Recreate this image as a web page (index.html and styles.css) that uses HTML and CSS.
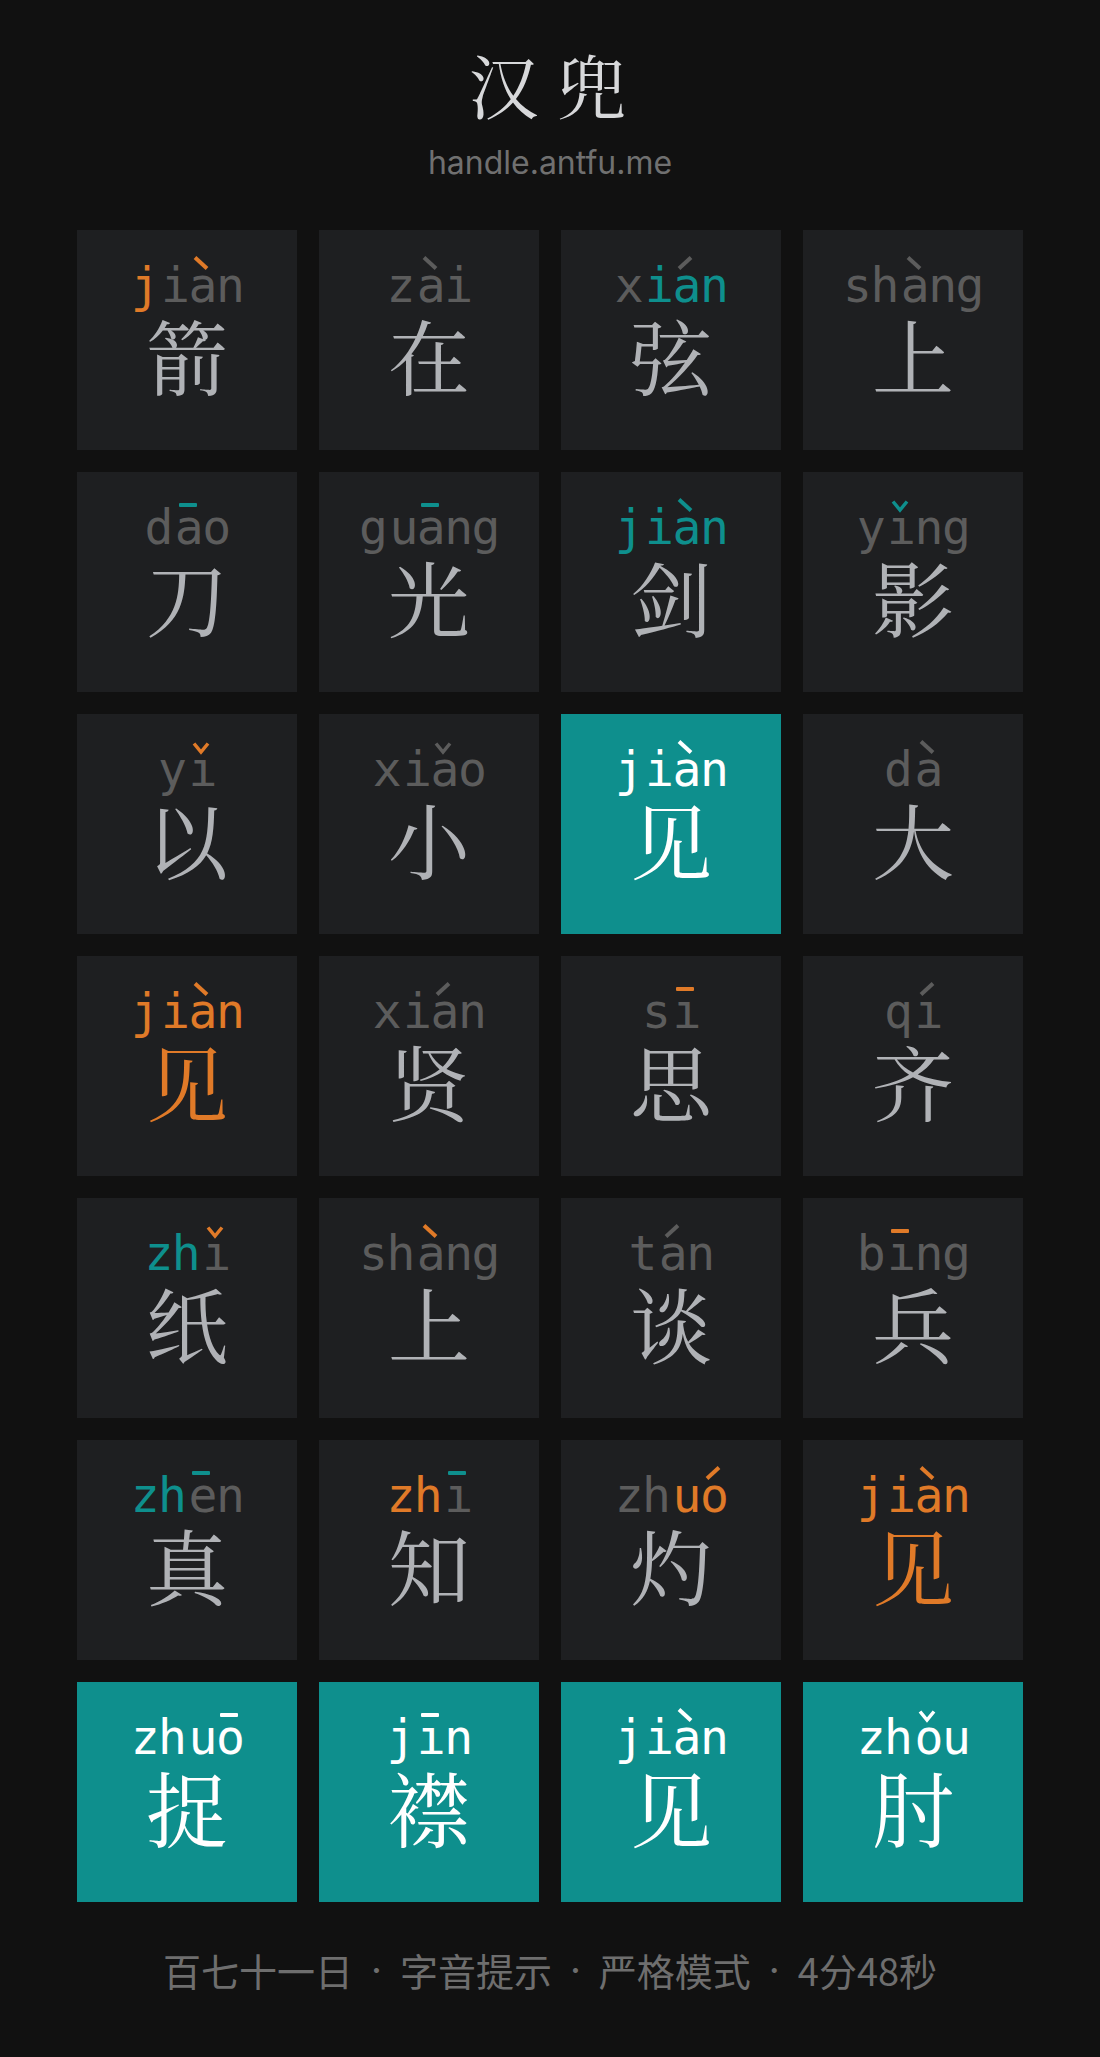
FILE: index.html
```html
<!DOCTYPE html>
<html lang="zh">
<head>
<meta charset="utf-8">
<title>汉兜</title>
<link rel="stylesheet" href="styles.css">
</head>
<body>
<main class="page">
  <header class="header">
    <h1 class="title"><span>汉</span><span>兜</span></h1>
    <div class="subtitle">handle.antfu.me</div>
  </header>

  <section class="board">
    <!-- row 1 -->
    <div class="cell"><div class="py"><span class="ini mid">j</span><span class="fin">i<span class="v">a<span class="tone mid"><svg width="16" height="14" viewBox="0 0 16 14"><path d="M2 1.5 L14 12.5"/></svg></span></span>n</span></div><div class="zi">箭</div></div>
    <div class="cell"><div class="py"><span class="ini">z</span><span class="fin"><span class="v">a<span class="tone"><svg width="16" height="14" viewBox="0 0 16 14"><path d="M2 1.5 L14 12.5"/></svg></span></span>i</span></div><div class="zi">在</div></div>
    <div class="cell"><div class="py"><span class="ini">x</span><span class="fin ok">i<span class="v">a<span class="tone gray"><svg width="16" height="14" viewBox="0 0 16 14"><path d="M2 12.5 L14 1.5"/></svg></span></span>n</span></div><div class="zi">弦</div></div>
    <div class="cell"><div class="py"><span class="ini">sh</span><span class="fin"><span class="v">a<span class="tone"><svg width="16" height="14" viewBox="0 0 16 14"><path d="M2 1.5 L14 12.5"/></svg></span></span>ng</span></div><div class="zi">上</div></div>

    <!-- row 2 -->
    <div class="cell"><div class="py"><span class="ini">d</span><span class="fin"><span class="v">a<span class="tone macron ok"><svg width="18" height="4" viewBox="0 0 18 4"><rect width="18" height="4" rx="1"/></svg></span></span>o</span></div><div class="zi">刀</div></div>
    <div class="cell"><div class="py"><span class="ini">g</span><span class="fin">u<span class="v">a<span class="tone macron ok"><svg width="18" height="4" viewBox="0 0 18 4"><rect width="18" height="4" rx="1"/></svg></span></span>ng</span></div><div class="zi">光</div></div>
    <div class="cell"><div class="py"><span class="ini ok">j</span><span class="fin ok">i<span class="v">a<span class="tone ok"><svg width="16" height="14" viewBox="0 0 16 14"><path d="M2 1.5 L14 12.5"/></svg></span></span>n</span></div><div class="zi">剑</div></div>
    <div class="cell"><div class="py"><span class="ini">y</span><span class="fin"><span class="v">ı<span class="tone caron ok"><svg width="18" height="12" viewBox="0 0 18 12"><path d="M2 1.5 L9 10 L16 1.5"/></svg></span></span>ng</span></div><div class="zi">影</div></div>

    <!-- row 3 -->
    <div class="cell"><div class="py"><span class="ini">y</span><span class="fin"><span class="v">ı<span class="tone caron mid"><svg width="18" height="12" viewBox="0 0 18 12"><path d="M2 1.5 L9 10 L16 1.5"/></svg></span></span></span></div><div class="zi">以</div></div>
    <div class="cell"><div class="py"><span class="ini">x</span><span class="fin">i<span class="v">a<span class="tone caron"><svg width="18" height="12" viewBox="0 0 18 12"><path d="M2 1.5 L9 10 L16 1.5"/></svg></span></span>o</span></div><div class="zi">小</div></div>
    <div class="cell exact"><div class="py"><span class="ini">j</span><span class="fin">i<span class="v">a<span class="tone"><svg width="16" height="14" viewBox="0 0 16 14"><path d="M2 1.5 L14 12.5"/></svg></span></span>n</span></div><div class="zi">见</div></div>
    <div class="cell"><div class="py"><span class="ini">d</span><span class="fin"><span class="v">a<span class="tone"><svg width="16" height="14" viewBox="0 0 16 14"><path d="M2 1.5 L14 12.5"/></svg></span></span></span></div><div class="zi">大</div></div>

    <!-- row 4 -->
    <div class="cell"><div class="py"><span class="ini mid">j</span><span class="fin mid">i<span class="v">a<span class="tone mid"><svg width="16" height="14" viewBox="0 0 16 14"><path d="M2 1.5 L14 12.5"/></svg></span></span>n</span></div><div class="zi mid">见</div></div>
    <div class="cell"><div class="py"><span class="ini">x</span><span class="fin">i<span class="v">a<span class="tone"><svg width="16" height="14" viewBox="0 0 16 14"><path d="M2 12.5 L14 1.5"/></svg></span></span>n</span></div><div class="zi">贤</div></div>
    <div class="cell"><div class="py"><span class="ini">s</span><span class="fin"><span class="v">ı<span class="tone macron mid"><svg width="18" height="4" viewBox="0 0 18 4"><rect width="18" height="4" rx="1"/></svg></span></span></span></div><div class="zi">思</div></div>
    <div class="cell"><div class="py"><span class="ini">q</span><span class="fin"><span class="v">ı<span class="tone"><svg width="16" height="14" viewBox="0 0 16 14"><path d="M2 12.5 L14 1.5"/></svg></span></span></span></div><div class="zi">齐</div></div>

    <!-- row 5 -->
    <div class="cell"><div class="py"><span class="ini ok">zh</span><span class="fin"><span class="v">ı<span class="tone caron mid"><svg width="18" height="12" viewBox="0 0 18 12"><path d="M2 1.5 L9 10 L16 1.5"/></svg></span></span></span></div><div class="zi">纸</div></div>
    <div class="cell"><div class="py"><span class="ini">sh</span><span class="fin"><span class="v">a<span class="tone mid"><svg width="16" height="14" viewBox="0 0 16 14"><path d="M2 1.5 L14 12.5"/></svg></span></span>ng</span></div><div class="zi">上</div></div>
    <div class="cell"><div class="py"><span class="ini">t</span><span class="fin"><span class="v">a<span class="tone"><svg width="16" height="14" viewBox="0 0 16 14"><path d="M2 12.5 L14 1.5"/></svg></span></span>n</span></div><div class="zi">谈</div></div>
    <div class="cell"><div class="py"><span class="ini">b</span><span class="fin"><span class="v">ı<span class="tone macron mid"><svg width="18" height="4" viewBox="0 0 18 4"><rect width="18" height="4" rx="1"/></svg></span></span>ng</span></div><div class="zi">兵</div></div>

    <!-- row 6 -->
    <div class="cell"><div class="py"><span class="ini ok">zh</span><span class="fin"><span class="v">e<span class="tone macron ok"><svg width="18" height="4" viewBox="0 0 18 4"><rect width="18" height="4" rx="1"/></svg></span></span>n</span></div><div class="zi">真</div></div>
    <div class="cell"><div class="py"><span class="ini mid">zh</span><span class="fin"><span class="v">ı<span class="tone macron ok"><svg width="18" height="4" viewBox="0 0 18 4"><rect width="18" height="4" rx="1"/></svg></span></span></span></div><div class="zi">知</div></div>
    <div class="cell"><div class="py"><span class="ini">zh</span><span class="fin mid">u<span class="v">o<span class="tone mid"><svg width="16" height="14" viewBox="0 0 16 14"><path d="M2 12.5 L14 1.5"/></svg></span></span></span></div><div class="zi">灼</div></div>
    <div class="cell"><div class="py"><span class="ini mid">j</span><span class="fin mid">i<span class="v">a<span class="tone mid"><svg width="16" height="14" viewBox="0 0 16 14"><path d="M2 1.5 L14 12.5"/></svg></span></span>n</span></div><div class="zi mid">见</div></div>

    <!-- row 7 -->
    <div class="cell exact"><div class="py"><span class="ini">zh</span><span class="fin">u<span class="v">o<span class="tone macron"><svg width="18" height="4" viewBox="0 0 18 4"><rect width="18" height="4" rx="1"/></svg></span></span></span></div><div class="zi">捉</div></div>
    <div class="cell exact"><div class="py"><span class="ini">j</span><span class="fin"><span class="v">ı<span class="tone macron"><svg width="18" height="4" viewBox="0 0 18 4"><rect width="18" height="4" rx="1"/></svg></span></span>n</span></div><div class="zi">襟</div></div>
    <div class="cell exact"><div class="py"><span class="ini">j</span><span class="fin">i<span class="v">a<span class="tone"><svg width="16" height="14" viewBox="0 0 16 14"><path d="M2 1.5 L14 12.5"/></svg></span></span>n</span></div><div class="zi">见</div></div>
    <div class="cell exact"><div class="py"><span class="ini">zh</span><span class="fin"><span class="v">o<span class="tone caron"><svg width="18" height="12" viewBox="0 0 18 12"><path d="M2 1.5 L9 10 L16 1.5"/></svg></span></span>u</span></div><div class="zi">肘</div></div>
  </section>

  <footer class="footer">
    <span>百七十一日</span><span class="dot">·</span><span>字音提示</span><span class="dot">·</span><span>严格模式</span><span class="dot">·</span><span>4分48秒</span>
  </footer>
</main>
</body>
</html>
```

FILE: styles.css
```css
html, body {
  margin: 0;
  padding: 0;
  background: #111111;
}

.page {
  width: 1100px;
  min-height: 2057px;
  display: flex;
  flex-direction: column;
  align-items: center;
}

.header {
  padding-top: 44px;
  display: flex;
  flex-direction: column;
  align-items: center;
}

.title {
  margin: 0;
  display: flex;
  gap: 18px;
  font-family: "Noto Serif CJK SC", "Source Han Serif SC", "Noto Sans CJK SC", serif;
  font-weight: 400;
  font-size: 70px;
  line-height: 80px;
  color: #d7d8da;
  margin-left: -5px;
}

.subtitle {
  margin-top: 19px;
  font-family: Inter, "Liberation Sans", sans-serif;
  font-size: 32px;
  line-height: 40px;
  color: #707070;
}

.board {
  margin-top: 47px;
  display: grid;
  grid-template-columns: repeat(4, 220px);
  grid-auto-rows: 220px;
  gap: 22px;
}

.cell {
  background: #1e1f21;
  display: flex;
  flex-direction: column;
  align-items: center;
  padding-top: 32px;
  box-sizing: border-box;
}

.cell.exact {
  background: #0e8f8d;
}

.py {
  font-family: "DejaVu Sans Mono", "Liberation Mono", monospace;
  font-size: 48px;
  line-height: 46px;
  height: 46px;
  white-space: nowrap;
  color: #5c5c5c;
  letter-spacing: -1.5px;
}

.ini {
  margin-right: 3px;
}

.v {
  position: relative;
}

.tone {
  position: absolute;
  left: calc(50% - 0.75px);
  top: -1px;
  transform: translateX(-50%);
  display: block;
  line-height: 0;
  color: #5c5c5c;
}

.tone.caron {
  top: 0.5px;
}

.tone.macron {
  top: 4px;
}

.tone svg {
  display: block;
  overflow: visible;
}

.tone path {
  fill: none;
  stroke: currentColor;
  stroke-width: 4;
}

.tone.caron path {
  stroke-width: 3.5;
  stroke-linejoin: miter;
}

.tone rect {
  fill: currentColor;
}

.ok { color: #0e8f8d; }
.mid { color: #e07a28; }
.gray { color: #5c5c5c; }

.zi {
  margin-top: 5px;
  font-family: "Noto Serif CJK SC", "Source Han Serif SC", "Noto Sans CJK SC", serif;
  font-size: 82px;
  line-height: 82px;
  color: #b0b2b6;
}

.zi.mid {
  color: #e07a28;
}

.cell.exact .py,
.cell.exact .tone,
.cell.exact .zi {
  color: #ffffff;
}

.footer {
  margin-top: 44px;
  font-family: "Noto Sans CJK SC", sans-serif;
  font-size: 38px;
  line-height: 48px;
  color: #6e6e6e;
  display: flex;
  align-items: center;
  white-space: nowrap;
}

.dot {
  font-family: Inter, "DejaVu Sans", sans-serif;
  padding: 0 18px;
}
```
